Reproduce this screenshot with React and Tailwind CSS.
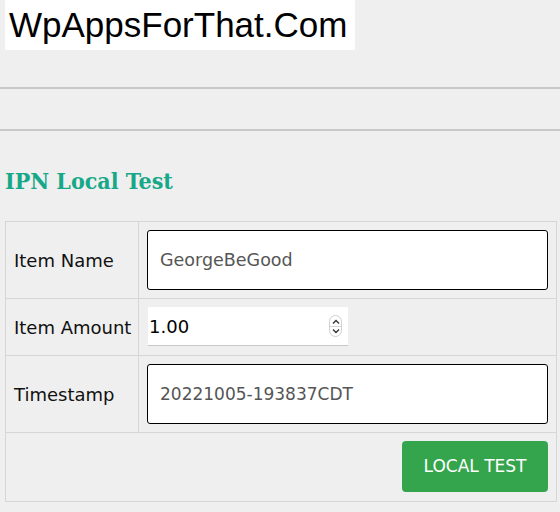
import React, { useState } from 'react';

const labelFont = { fontFamily: '"DejaVu Sans", Verdana, sans-serif' };

const App = () => {
  const [name, setName] = useState('GeorgeBeGood');
  const [amount, setAmount] = useState('1.00');
  const [stamp, setStamp] = useState('20221005-193837CDT');

  return (
    <div className="min-h-[512px] w-[560px] bg-[#efefef] overflow-hidden">
      {/* Site title */}
      <div className="px-[5px]">
        <div className="inline-block bg-white pl-[4px] pr-[8px] h-[50px] leading-[50px] text-[35px] text-black font-['Liberation_Sans',Arial,sans-serif]">
          WpAppsForThat.Com
        </div>
      </div>

      <div className="mt-[37px] border-t-2 border-[#c8c8c8]"></div>
      <div className="mt-[40px] border-t-2 border-[#c8c8c8]"></div>

      <div className="px-[5px]">
        <h2 className="mt-[35px] text-[23px] font-bold font-stretch-condensed text-[#17a889] font-['DejaVu_Serif',serif] leading-[30px]">
          IPN Local Test
        </h2>

        <form className="mt-[25px] w-[552px] border border-[#d6d6d6] text-[18px] text-[#111]" style={labelFont}>
          <div className="grid grid-cols-[133px_1fr]">
            <div className="h-[77px] flex items-center pl-[8px] border-r border-b border-[#d6d6d6]">Item Name</div>
            <div className="h-[77px] pl-[8px] pr-[8px] pt-[8px] border-b border-[#d6d6d6]">
              <input
                value={name}
                onChange={(e) => setName(e.target.value)}
                className="w-full h-[60px] bg-white border border-black rounded-[3px] px-[12px] text-[17.5px] text-[#555] outline-none"
                style={labelFont}
              />
            </div>

            <div className="h-[57px] flex items-center pl-[8px] border-r border-b border-[#d6d6d6]">Item Amount</div>
            <div className="h-[57px] pl-[9px] pt-[8px] border-b border-[#d6d6d6]">
              <div className="w-[200px] h-[39px] bg-white border-b border-[#c8c8c8] flex items-center pl-[1px] pr-[6px]">
                <span className="flex-1 text-[18px] text-black">{amount}</span>
                <div className="w-[13px] h-[22px] rounded-full border border-[#cfcfcf] flex flex-col items-center justify-center text-[#333]">
                  <svg width="8" height="6" viewBox="0 0 8 6"><path d="M1 4.5 L4 1.5 L7 4.5" fill="none" stroke="currentColor" strokeWidth="1.4" /></svg>
                  <div className="w-full border-t border-[#d6d6d6] my-[1px]"></div>
                  <svg width="8" height="6" viewBox="0 0 8 6"><path d="M1 1.5 L4 4.5 L7 1.5" fill="none" stroke="currentColor" strokeWidth="1.4" /></svg>
                </div>
              </div>
            </div>

            <div className="h-[77px] flex items-center pl-[8px] border-r border-b border-[#d6d6d6]">Timestamp</div>
            <div className="h-[77px] pl-[8px] pr-[8px] pt-[8px] border-b border-[#d6d6d6]">
              <input
                value={stamp}
                onChange={(e) => setStamp(e.target.value)}
                className="w-full h-[60px] bg-white border border-black rounded-[3px] px-[12px] text-[17px] text-[#555] outline-none"
                style={labelFont}
              />
            </div>
          </div>
          <div className="h-[68px] flex justify-end items-start pt-[8px] pr-[8px]">
            <button
              type="button"
              onClick={() => setAmount(amount)}
              className="w-[146px] h-[51px] bg-[#34a54d] text-white text-[17px] font-medium rounded-[4px]"
              style={labelFont}
            >
              LOCAL TEST
            </button>
          </div>
        </form>
      </div>
    </div>
  );
};

export default App;
